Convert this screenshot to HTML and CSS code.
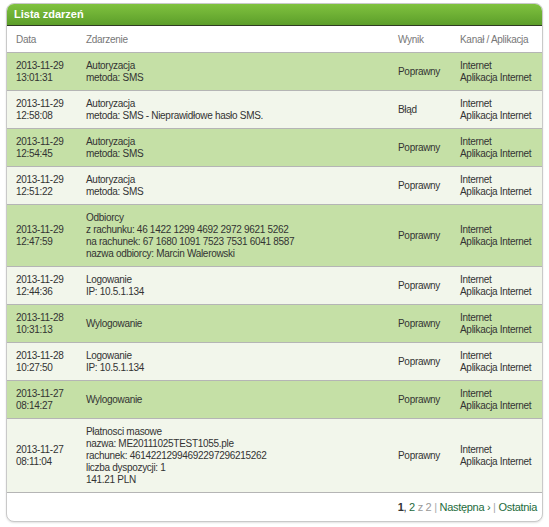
FILE: index.html
```html
<!DOCTYPE html>
<html lang="pl">
<head>
  <meta charset="UTF-8">
  <title>Lista zdarzeń</title>
  <link rel="stylesheet" href="styles.css">
</head>
<body>
  <div class="panel">
    <div class="panel-head">Lista zdarzeń</div>
    <table class="events">
      <thead>
        <tr>
          <th class="c-date">Data</th>
          <th class="c-event">Zdarzenie</th>
          <th class="c-result">Wynik</th>
          <th class="c-channel">Kanał / Aplikacja</th>
        </tr>
      </thead>
      <tbody>
        <tr class="odd">
          <td>2013-11-29<br>13:01:31</td>
          <td>Autoryzacja<br>metoda: SMS</td>
          <td>Poprawny</td>
          <td>Internet<br>Aplikacja Internet</td>
        </tr>
        <tr class="even">
          <td>2013-11-29<br>12:58:08</td>
          <td>Autoryzacja<br>metoda: SMS - Nieprawidłowe hasło SMS.</td>
          <td>Błąd</td>
          <td>Internet<br>Aplikacja Internet</td>
        </tr>
        <tr class="odd">
          <td>2013-11-29<br>12:54:45</td>
          <td>Autoryzacja<br>metoda: SMS</td>
          <td>Poprawny</td>
          <td>Internet<br>Aplikacja Internet</td>
        </tr>
        <tr class="even">
          <td>2013-11-29<br>12:51:22</td>
          <td>Autoryzacja<br>metoda: SMS</td>
          <td>Poprawny</td>
          <td>Internet<br>Aplikacja Internet</td>
        </tr>
        <tr class="odd">
          <td>2013-11-29<br>12:47:59</td>
          <td>Odbiorcy<br>z rachunku: 46 1422 1299 4692 2972 9621 5262<br>na rachunek: 67 1680 1091 7523 7531 6041 8587<br>nazwa odbiorcy: Marcin Walerowski</td>
          <td>Poprawny</td>
          <td>Internet<br>Aplikacja Internet</td>
        </tr>
        <tr class="even">
          <td>2013-11-29<br>12:44:36</td>
          <td>Logowanie<br>IP: 10.5.1.134</td>
          <td>Poprawny</td>
          <td>Internet<br>Aplikacja Internet</td>
        </tr>
        <tr class="odd">
          <td>2013-11-28<br>10:31:13</td>
          <td>Wylogowanie</td>
          <td>Poprawny</td>
          <td>Internet<br>Aplikacja Internet</td>
        </tr>
        <tr class="even">
          <td>2013-11-28<br>10:27:50</td>
          <td>Logowanie<br>IP: 10.5.1.134</td>
          <td>Poprawny</td>
          <td>Internet<br>Aplikacja Internet</td>
        </tr>
        <tr class="odd">
          <td>2013-11-27<br>08:14:27</td>
          <td>Wylogowanie</td>
          <td>Poprawny</td>
          <td>Internet<br>Aplikacja Internet</td>
        </tr>
        <tr class="even">
          <td>2013-11-27<br>08:11:04</td>
          <td>Płatnosci masowe<br>nazwa: ME20111025TEST1055.ple<br>rachunek: 46142212994692297296215262<br>liczba dyspozycji: 1<br>141.21 PLN</td>
          <td>Poprawny</td>
          <td>Internet<br>Aplikacja Internet</td>
        </tr>
      </tbody>
    </table>
    <div class="pager">
      <b>1</b>, <a href="#">2</a> <span class="muted">z 2</span> <span class="sep">|</span> <a href="#">Następna ›</a> <span class="sep">|</span> <a href="#">Ostatnia</a>
    </div>
  </div>
</body>
</html>
```

FILE: styles.css
```css
body {
  margin: 0;
  padding: 3px 6px 4px 6px;
  font-family: "Liberation Sans", Arial, sans-serif;
  font-size: 10px;
  letter-spacing: -0.3px;
  color: #333;
  background: #fff;
}
.panel {
  border: 1px solid #c9c9c9;
  border-radius: 8px;
  box-shadow: 0 1px 2px rgba(0,0,0,0.12);
  overflow: hidden;
  background: #fff;
}
.panel-head {
  height: 21px;
  line-height: 21px;
  padding-left: 7px;
  background: linear-gradient(#80c23f, #5c9e2a);
  border-bottom: 1px solid #2f3a22;
  color: #fff;
  font-weight: bold;
  font-size: 11px;
  letter-spacing: 0;
}
.events {
  width: 100%;
  border-collapse: collapse;
  table-layout: fixed;
}
.events th {
  text-align: left;
  font-weight: normal;
  color: #777;
  height: 26px;
  padding: 0 0 0 9px;
  border-bottom: 1px solid #b5b5b5;
  white-space: nowrap;
}
.events td {
  padding: 7px 0 6px 9px;
  line-height: 12px;
  vertical-align: middle;
  border-bottom: 1px solid #b5b5b5;
  white-space: nowrap;
}
.c-date { width: 61px; }
.c-event { width: 303px; }
.c-result { width: 53px; }
.events tr.odd td { background: #c5e0a6; }
.events tr.even td { background: #f2f6eb; }
.pager {
  height: 28px;
  line-height: 28px;
  text-align: right;
  padding-right: 5px;
  font-size: 11px;
  color: #333;
}
.pager a {
  color: #1d6b3c;
  text-decoration: none;
}
.pager .muted { color: #999; }
.pager .sep { color: #aaa; }
```
